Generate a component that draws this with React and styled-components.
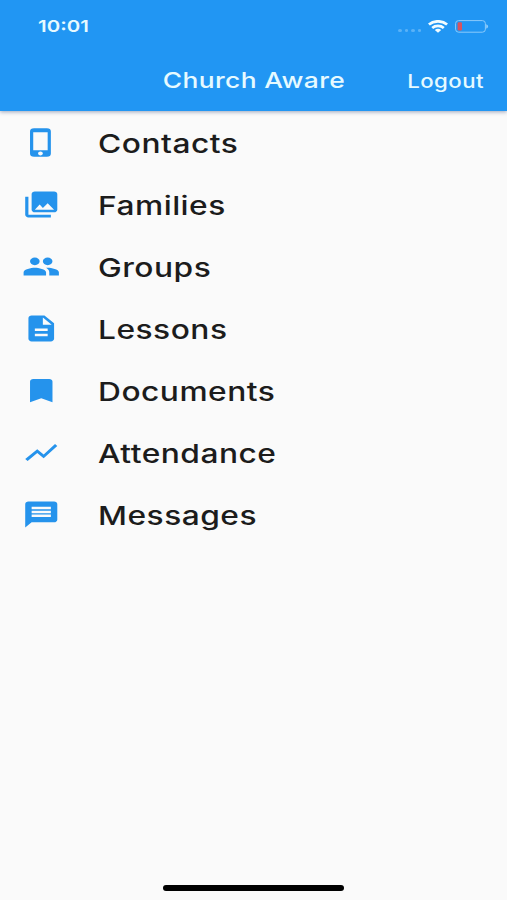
import React from "react";
import styled, {createGlobalStyle} from "styled-components";
import {
  MdPhoneIphone,
  MdPhotoLibrary,
  MdPeople,
  MdDescription,
  MdBookmark,
  MdShowChart,
  MdMessage,
} from "react-icons/md";

const menus = [
  {title: "Contacts", icon: MdPhoneIphone},
  {title: "Families", icon: MdPhotoLibrary},
  {title: "Groups", icon: MdPeople},
  {title: "Lessons", icon: MdDescription},
  {title: "Documents", icon: MdBookmark},
  {title: "Attendance", icon: MdShowChart},
  {title: "Messages", icon: MdMessage},
];

const App = () => {
  return (
    <>
      <GlobalStyle />
      <Screen>
        <Header>
          <StatusBar>
            <Time>10:01</Time>
            <StatusIcons>
              <Signal>
                <i />
                <i />
                <i />
                <i />
              </Signal>
              <WifiIcon />
              <BatteryIcon />
            </StatusIcons>
          </StatusBar>
          <AppBar>
            <Title>Church Aware</Title>
            <Logout type="button">Logout</Logout>
          </AppBar>
        </Header>
        <MenuList>
          {menus.map(({title, icon: Icon}) => (
            <MenuItem key={title}>
              <IconBox>
                <Icon preserveAspectRatio="none" />
              </IconBox>
              <MenuText>{title}</MenuText>
            </MenuItem>
          ))}
        </MenuList>
        <HomeIndicator />
      </Screen>
    </>
  );
};

const WifiIcon = () => (
  <svg width="20" height="13" viewBox="0 0 20 13" fill="none" stroke="#f2fcff" strokeWidth="2.7">
    <path d="M0.9 4.6C6 0.2 14 0.2 19.1 4.6" />
    <path d="M4.2 8C7.4 5.2 12.6 5.2 15.8 8" />
    <path d="M6.8 9.9C8.8 8.4 11.2 8.4 13.2 9.9L10 12.8Z" fill="#f2fcff" stroke="none" />
  </svg>
);

const BatteryIcon = () => (
  <svg width="34" height="13" viewBox="0 0 34 13">
    <rect x="0.6" y="0.6" width="29.8" height="11.6" rx="3" fill="none" stroke="#8ccbfb" strokeWidth="1" />
    <rect x="2.6" y="2.3" width="4.4" height="8.2" rx="1.2" fill="#d9535f" />
    <path d="M31.2 4.2C33.8 5 33.8 7.8 31.2 8.6Z" fill="#8ccbfb" />
  </svg>
);

const GlobalStyle = createGlobalStyle`
  * {
    box-sizing: border-box;
  }
  body {
    margin: 0;
    background: #fafafa;
    font-family: Inter, "Liberation Sans", sans-serif;
  }
`;

const Screen = styled.div`
  display: flex;
  flex-direction: column;
  width: 507px;
  height: 900px;
  background: #fafafa;
  overflow: hidden;
`;
const Header = styled.header`
  height: 111px;
  flex-shrink: 0;
  background: #2196f3;
  color: #e6faff;
  box-shadow: 0 1px 4px rgba(40, 60, 110, 0.45);
`;
const StatusBar = styled.div`
  display: flex;
  justify-content: space-between;
  align-items: center;
  height: 52px;
  padding: 0 18px 0 38px;
`;
const Time = styled.span`
  font-size: 16.5px;
  font-weight: 600;
  transform: scaleX(1.24);
  transform-origin: left center;
`;
const StatusIcons = styled.div`
  display: flex;
  align-items: center;
  gap: 7px;
`;
const Signal = styled.div`
  display: flex;
  gap: 3px;
  padding-top: 8px;

  i {
    width: 3.5px;
    height: 3px;
    border-radius: 50%;
    background: #5ab2f7;
  }
`;
const AppBar = styled.div`
  display: grid;
  grid-template-columns: 1fr auto 1fr;
  align-items: center;
  height: 56px;
  padding: 0 22.5px 0 23px;
`;
const Title = styled.h1`
  grid-column: 2;
  margin: 0;
  font-size: 22px;
  font-weight: 500;
  letter-spacing: 0.3px;
  transform: scaleX(1.2);
`;
const Logout = styled.button`
  justify-self: end;
  padding: 1px 0 0;
  border: none;
  background: none;
  color: inherit;
  font-family: inherit;
  font-size: 18.5px;
  font-weight: 500;
  letter-spacing: 0.4px;
  transform: scaleX(1.2);
  transform-origin: right center;
`;
const MenuList = styled.ul`
  flex: 1;
  margin: 0;
  padding: 0;
  list-style: none;
`;
const MenuItem = styled.li`
  display: flex;
  align-items: center;
  height: 62px;
  padding-left: 22px;
`;
const IconBox = styled.span`
  display: flex;
  margin-right: 37.5px;
  color: #2593ec;

  svg {
    width: 38.5px;
    height: 31px;
  }
`;
const MenuText = styled.span`
  padding-top: 2px;
  color: #1c1c1c;
  font-size: 26px;
  font-weight: 450;
  letter-spacing: 0.4px;
  transform: scaleX(1.22);
  transform-origin: left center;
`;
const HomeIndicator = styled.div`
  width: 181px;
  height: 6px;
  margin: 0 auto 9px;
  border-radius: 3px;
  background: #000;
`;

export default App;
